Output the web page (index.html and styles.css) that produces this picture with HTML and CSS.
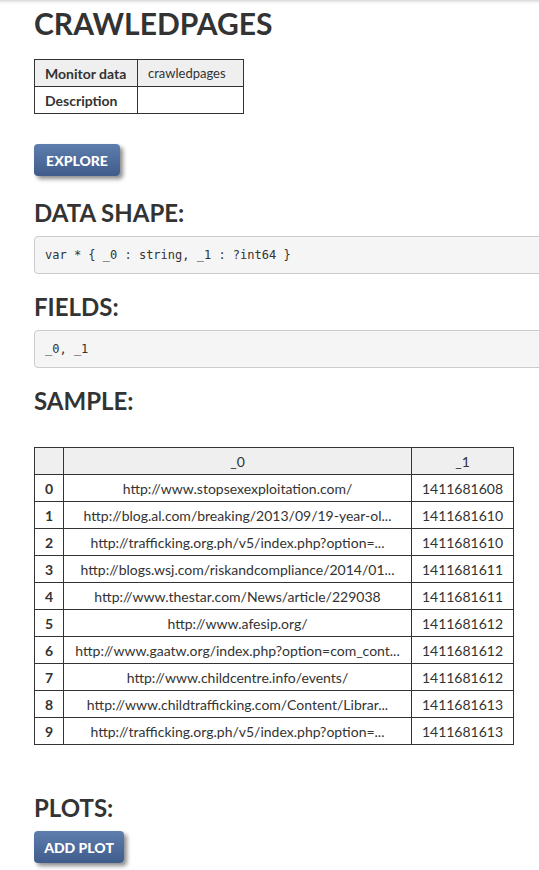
FILE: index.html
```
<!DOCTYPE html>
<html>
<head>
<meta charset="utf-8">
<title>crawledpages</title>
<link rel="stylesheet" href="styles.css">
</head>
<body>
<div class="topshade"></div>
<main class="page">
  <h1 class="title">CRAWLEDPAGES</h1>
  <table class="meta">
    <tr class="meta-head"><th>Monitor data</th><td>crawledpages</td></tr>
    <tr><th>Description</th><td></td></tr>
  </table>
  <button class="btn btn-explore">EXPLORE</button>

  <h2 class="section first">DATA SHAPE:</h2>
  <pre class="code">var * { _0 : string, _1 : ?int64 }</pre>

  <h2 class="section">FIELDS:</h2>
  <pre class="code">_0, _1</pre>

  <h2 class="section">SAMPLE:</h2>
  <table class="sample">
    <thead>
      <tr><th class="idx"></th><th class="c0">_0</th><th class="c1">_1</th></tr>
    </thead>
    <tbody>
      <tr><th class="idx">0</th><td>http://www.stopsexexploitation.com/</td><td>1411681608</td></tr>
      <tr><th class="idx">1</th><td>http://blog.al.com/breaking/2013/09/19-year-ol...</td><td>1411681610</td></tr>
      <tr><th class="idx">2</th><td>http://trafficking.org.ph/v5/index.php?option=...</td><td>1411681610</td></tr>
      <tr><th class="idx">3</th><td>http://blogs.wsj.com/riskandcompliance/2014/01...</td><td>1411681611</td></tr>
      <tr><th class="idx">4</th><td>http://www.thestar.com/News/article/229038</td><td>1411681611</td></tr>
      <tr><th class="idx">5</th><td>http://www.afesip.org/</td><td>1411681612</td></tr>
      <tr><th class="idx">6</th><td>http://www.gaatw.org/index.php?option=com_cont...</td><td>1411681612</td></tr>
      <tr><th class="idx">7</th><td>http://www.childcentre.info/events/</td><td>1411681612</td></tr>
      <tr><th class="idx">8</th><td>http://www.childtrafficking.com/Content/Librar...</td><td>1411681613</td></tr>
      <tr><th class="idx">9</th><td>http://trafficking.org.ph/v5/index.php?option=...</td><td>1411681613</td></tr>
    </tbody>
  </table>

  <h2 class="section plots">PLOTS:</h2>
  <button class="btn btn-add">ADD PLOT</button>
</main>
</body>
</html>
```
FILE: styles.css
```
html, body {
  margin: 0;
  padding: 0;
  background: #fff;
  overflow-x: hidden;
}
body {
  font-family: Lato, "Open Sans", "Liberation Sans", sans-serif;
  color: #333;
  font-size: 14px;
}
.topshade {
  height: 4px;
  background: linear-gradient(to bottom, #d8d8d8, #f4f4f4 60%, #fff);
}
.page {
  padding: 0 0 40px 34px;
  display: flex;
  flex-direction: column;
  align-items: flex-start;
}
.title {
  margin: 3px 0 0;
  font-size: 30px;
  line-height: 33px;
  font-weight: 700;
  color: #333;
}
.meta {
  margin-top: 19px;
  border-collapse: collapse;
  width: 210px;
}
.meta th, .meta td {
  border: 1px solid #333;
  height: 27px;
  padding: 0 10px;
  text-align: left;
  box-sizing: border-box;
}
.meta th {
  font-weight: 700;
  font-size: 14px;
  width: 103px;
}
.meta td {
  font-size: 13px;
}
.meta-head th, .meta-head td {
  background: #efefef;
}
.btn {
  font-family: Lato, "Open Sans", "Liberation Sans", sans-serif;
  font-weight: 900;
  font-size: 14px;
  color: #fff;
  border: none;
  border-radius: 4px;
  height: 32px;
  padding: 0 10px;
  background: linear-gradient(to bottom, #5d7eae, #405c8b);
  box-shadow: 3px 3px 4px rgba(0, 0, 0, 0.45);
  cursor: pointer;
}
.btn-explore {
  margin-top: 30px;
  width: 86px;
}
.btn-add {
  margin-top: 10px;
  width: 90px;
}
.section {
  margin: 20px 0 0;
  font-size: 24px;
  line-height: 26px;
  font-weight: 700;
  color: #333;
}
.section.first {
  margin-top: 24px;
}
.code {
  margin: 10px 0 0;
  width: 560px;
  box-sizing: border-box;
  padding: 9px 10px;
  height: 38px;
  font-family: "DejaVu Sans Mono", "Liberation Mono", monospace;
  font-size: 12px;
  line-height: 18px;
  background: #f5f5f5;
  border: 1px solid #ccc;
  border-radius: 4px;
  color: #333;
}
.sample {
  margin-top: 33px;
  border-collapse: collapse;
  width: 479px;
  table-layout: fixed;
}
.sample th, .sample td {
  border: 1px solid #333;
  height: 27px;
  padding: 0 4px;
  text-align: center;
  font-size: 14px;
  box-sizing: border-box;
  white-space: nowrap;
  overflow: hidden;
}
.sample th.idx {
  width: 29px;
  font-weight: 700;
}
.sample th.c0 {
  width: 348px;
}
.sample th.c1 {
  width: 102px;
}
.sample thead th {
  background: #efefef;
  font-weight: 400;
}
.section.plots {
  margin-top: 50px;
}
```
